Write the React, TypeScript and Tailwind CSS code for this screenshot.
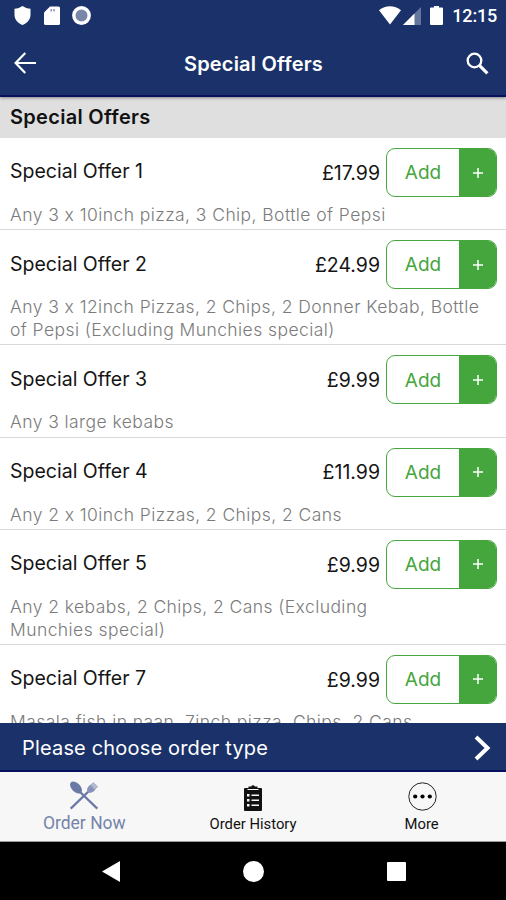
import type { ReactNode } from 'react';

interface Offer {
  name: string;
  price: string;
  lines: string[];
}

const offers: Offer[] = [
  { name: 'Special Offer 1', price: '£17.99', lines: ['Any 3 x 10inch pizza, 3 Chip, Bottle of Pepsi'] },
  { name: 'Special Offer 2', price: '£24.99', lines: ['Any 3 x 12inch Pizzas, 2 Chips, 2 Donner Kebab, Bottle', 'of Pepsi (Excluding Munchies special)'] },
  { name: 'Special Offer 3', price: '£9.99', lines: ['Any 3 large kebabs'] },
  { name: 'Special Offer 4', price: '£11.99', lines: ['Any 2 x 10inch Pizzas, 2 Chips, 2 Cans'] },
  { name: 'Special Offer 5', price: '£9.99', lines: ['Any 2 kebabs, 2 Chips, 2 Cans (Excluding', 'Munchies special)'] },
  { name: 'Special Offer 7', price: '£9.99', lines: ['Masala fish in naan, 7inch pizza, Chips, 2 Cans'] },
];

export default function App() {
  return (
    <div className="flex h-[900px] w-[506px] flex-col overflow-hidden bg-white font-['Inter',sans-serif]">
      <header className="relative z-10 h-[97px] shrink-0 border-b-2 border-[#07105c] bg-[#1a3269] text-white shadow-[0_1px_3px_rgba(0,0,0,0.4)]">
        <StatusBar />
        <div className="flex h-[64px] items-center justify-between pr-[17px] pl-[14px]">
          <button aria-label="Back">
            <svg className="h-[22px] w-[22px]" viewBox="0 0 22 22" fill="none" stroke="currentColor" strokeWidth="2.2">
              <path d="M11.3 1 1.6 11l9.7 10M1.6 11H22" />
            </svg>
          </button>
          <h1 className="pt-[1px] pl-[5px] text-[20px] font-semibold tracking-[0.2px]">Special Offers</h1>
          <button aria-label="Search">
            <svg className="h-[23px] w-[23px]" viewBox="0 0 23 23" fill="none" stroke="currentColor">
              <circle cx="8.5" cy="8.5" r="6.8" strokeWidth="2.3" />
              <path d="m13.6 13.6 7.8 7.8" strokeWidth="3.2" />
            </svg>
          </button>
        </div>
      </header>

      <h2 className="h-[41px] shrink-0 bg-[#dfdfdf] pl-[10px] text-[20px] leading-[41px] font-semibold tracking-[0.3px] text-[#111]">Special Offers</h2>

      <main className="min-h-0 flex-1 overflow-hidden">
        {offers.map((offer) => <OfferRow key={offer.name} offer={offer} />)}
      </main>

      <button className="flex h-[49px] shrink-0 items-center justify-between border-b-2 border-[#07105c] bg-[#1a3269] pr-[15px] pl-[22px] text-white">
        <span className="pt-[2px] text-[20px] tracking-[0.17px]">Please choose order type</span>
        <svg className="mt-[2px] h-[26px] w-[17px]" viewBox="0 0 17 26" fill="none" stroke="currentColor" strokeWidth="4">
          <path d="m2 2 11.5 11L2 24" />
        </svg>
      </button>

      <nav className="grid h-[70px] shrink-0 grid-cols-3 border-b border-[#999] bg-[#f7f7f7] font-['Roboto',sans-serif]">
        <Tab label="Order Now" active>
          <CutleryIcon />
        </Tab>
        <Tab label="Order History">
          <ClipboardIcon />
        </Tab>
        <Tab label="More">
          <svg className="mb-[1px] ml-[2px] h-[29px] w-[29px]" viewBox="0 0 29 29">
            <circle cx="14.5" cy="14.5" r="13.7" fill="none" stroke="#222" strokeWidth="1" />
            <circle cx="7.2" cy="14.5" r="2.1" />
            <circle cx="14.5" cy="14.5" r="2.1" />
            <circle cx="21.8" cy="14.5" r="2.1" />
          </svg>
        </Tab>
      </nav>

      <div className="flex h-[58px] shrink-0 items-center justify-between bg-black pr-[100px] pl-[102px]">
        <svg className="h-[21px] w-[18px]" viewBox="0 0 18 21"><path d="M18 0v21L0 10.5z" fill="#fff" /></svg>
        <div className="h-[21px] w-[21px] rounded-full bg-white" />
        <div className="h-[19px] w-[19px] rounded-[1px] bg-white" />
      </div>
    </div>
  );
}

function StatusBar() {
  return (
    <div className="flex h-[31px] items-center justify-between pr-[9px] pl-[14px]">
      <div className="flex items-center gap-[12.5px]">
        <svg className="h-[19px] w-[17px]" viewBox="0 0 17 19" fill="#fff">
          <path d="M8.5 0c2.4 1.6 5 2.5 8 2.8V9c0 4.4-3.3 8.2-8 10C3.8 17.2.5 13.4.5 9V2.8c3-.3 5.6-1.2 8-2.8z" />
        </svg>
        <svg className="h-[19px] w-[16px]" viewBox="0 0 16 19" fill="#fff">
          <path d="M6 .5h8.5A1.5 1.5 0 0 1 16 2v15.5a1.5 1.5 0 0 1-1.5 1.5h-13A1.5 1.5 0 0 1 0 17.5v-11z" />
          <path d="M6.5 3H8v2.500H6.500zM9.300 3h1.500v2.500H9.300z" fill="#8793b0" />
        </svg>
        <svg className="h-[19px] w-[19px]" viewBox="0 0 19 19">
          <circle cx="9.5" cy="9.5" r="7.7" fill="#7786a9" stroke="#fff" strokeWidth="3.4" />
        </svg>
      </div>
      <div className="flex items-center">
        <svg className="h-[19px] w-[22px]" viewBox="0 0 22 19" fill="#fff">
          <path d="M0 4.2C6.5-1.1 15.5-1.1 22 4.2L11 18.5z" />
        </svg>
        <svg className="ml-[2px] h-[18px] w-[18px]" viewBox="0 0 18 18">
          <path d="M18 0v18H0z" fill="#65769d" />
          <path d="M11.5 6.5V18H0z" fill="#fff" />
        </svg>
        <svg className="ml-[9px] h-[19px] w-[13px]" viewBox="0 0 13 19" fill="#fff">
          <path d="M4 0h5v1.5h3a1 1 0 0 1 1 1V18a1 1 0 0 1-1 1H1a1 1 0 0 1-1-1V2.500a1 1 0 0 1 1-1h3z" />
        </svg>
        <span className="ml-[9px] font-['Roboto',sans-serif] text-[18px] leading-none font-medium tracking-[-0.2px]">12:15</span>
      </div>
    </div>
  );
}

function OfferRow({ offer }: { offer: Offer }) {
  return (
    <div className="border-b border-[#d9d9d9] pt-[10px] pr-[9px] pb-[3.2px] pl-[10px]">
      <div className="flex h-[49px] items-center">
        <span className="flex-1 pb-[1px] text-[19.5px] text-[#151515]">{offer.name}</span>
        <span className="mr-[6px] pt-[2px] text-[19.5px] text-[#151515]">{offer.price}</span>
        <button className="flex h-[49px] w-[111px] overflow-hidden rounded-[9px] border border-[#46a63e] text-[19px] text-[#46a63e]">
          <span className="flex flex-1 items-center justify-center pt-[2px]">Add</span>
          <span className="flex w-[37px] items-center justify-center bg-[#46a63e]">
            <svg className="h-[10px] w-[10px]" viewBox="0 0 10 10" stroke="#fff" strokeWidth="1.5"><path d="M5 0v10M0 5h10" /></svg>
          </span>
        </button>
      </div>
      <div className="mt-[6px] text-[17.5px] leading-[23px] font-[350] tracking-[0.43px] whitespace-nowrap text-[#7b7b7b] [font-feature-settings:'calt'_0]">
        {offer.lines.map((line) => <p key={line}>{line}</p>)}
      </div>
    </div>
  );
}

function Tab({ label, active, children }: { label: string; active?: boolean; children: ReactNode }) {
  return (
    <button className={`flex flex-col items-center ${active ? 'text-[#7583aa]' : 'text-[#111]'}`}>
      <span className="flex h-[40px] items-end">{children}</span>
      <span className={active ? 'pt-[1px] text-[17.5px] leading-[20px]' : 'pt-[2px] text-[14.8px] leading-[20px]'}>{label}</span>
    </button>
  );
}

function CutleryIcon() {
  return (
    <svg className="mb-[2px] h-[29px] w-[30px]" viewBox="0 0 30 29" fill="none">
      <path d="M9 9 28.300 27.700" stroke="#6b7aa5" strokeWidth="2.3" />
      <path d="M1.700 27.700 21 9" stroke="#6b7aa5" strokeWidth="2.3" />
      <ellipse cx="7" cy="6.500" rx="4.400" ry="7.200" transform="rotate(-44 7 6.500)" fill="#6b7aa5" />
      <path d="M18.500 10.500c-.8-2.500.2-4.300 1.800-5.700L24.500 1.200 29 5.500 25.200 9.800c-1.500 1.500-3.700 2.400-6.200 1.500z" fill="#a3adc8" />
      <path d="M18.500 10.500c-.8-2.500.2-4.300 1.800-5.700l1.200-1 4.700 4.700-1 1.300c-1.500 1.500-3.700 2.400-6.200 1.500z" fill="#8793b6" />
      <path d="m22.500 5.700 3.700-3.400M24.200 7.500l3.700-3.600" stroke="#dfe3ec" strokeWidth=".8" />
    </svg>
  );
}

function ClipboardIcon() {
  return (
    <svg className="mb-[1px] h-[27px] w-[18px]" viewBox="0 0 18 27">
      <path d="M1 4h3.500V2.500h2.700a1.900 1.900 0 0 1 3.600 0h2.700V4H17a1 1 0 0 1 1 1v21a1 1 0 0 1-1 1H1a1 1 0 0 1-1-1V5a1 1 0 0 1 1-1z" fill="#111" />
      <path d="M3.500 5.500h11" stroke="#f7f7f7" strokeWidth="1" />
      <path d="M3 10h2.500v2.500H3zM3 15h2.500v2.500H3zM3 20h2.500v2.500H3zM7.500 10.500H15V12H7.500zM7.500 15.500H15V17H7.500zM7.500 20.500H15V22H7.500z" fill="#f7f7f7" />
    </svg>
  );
}
